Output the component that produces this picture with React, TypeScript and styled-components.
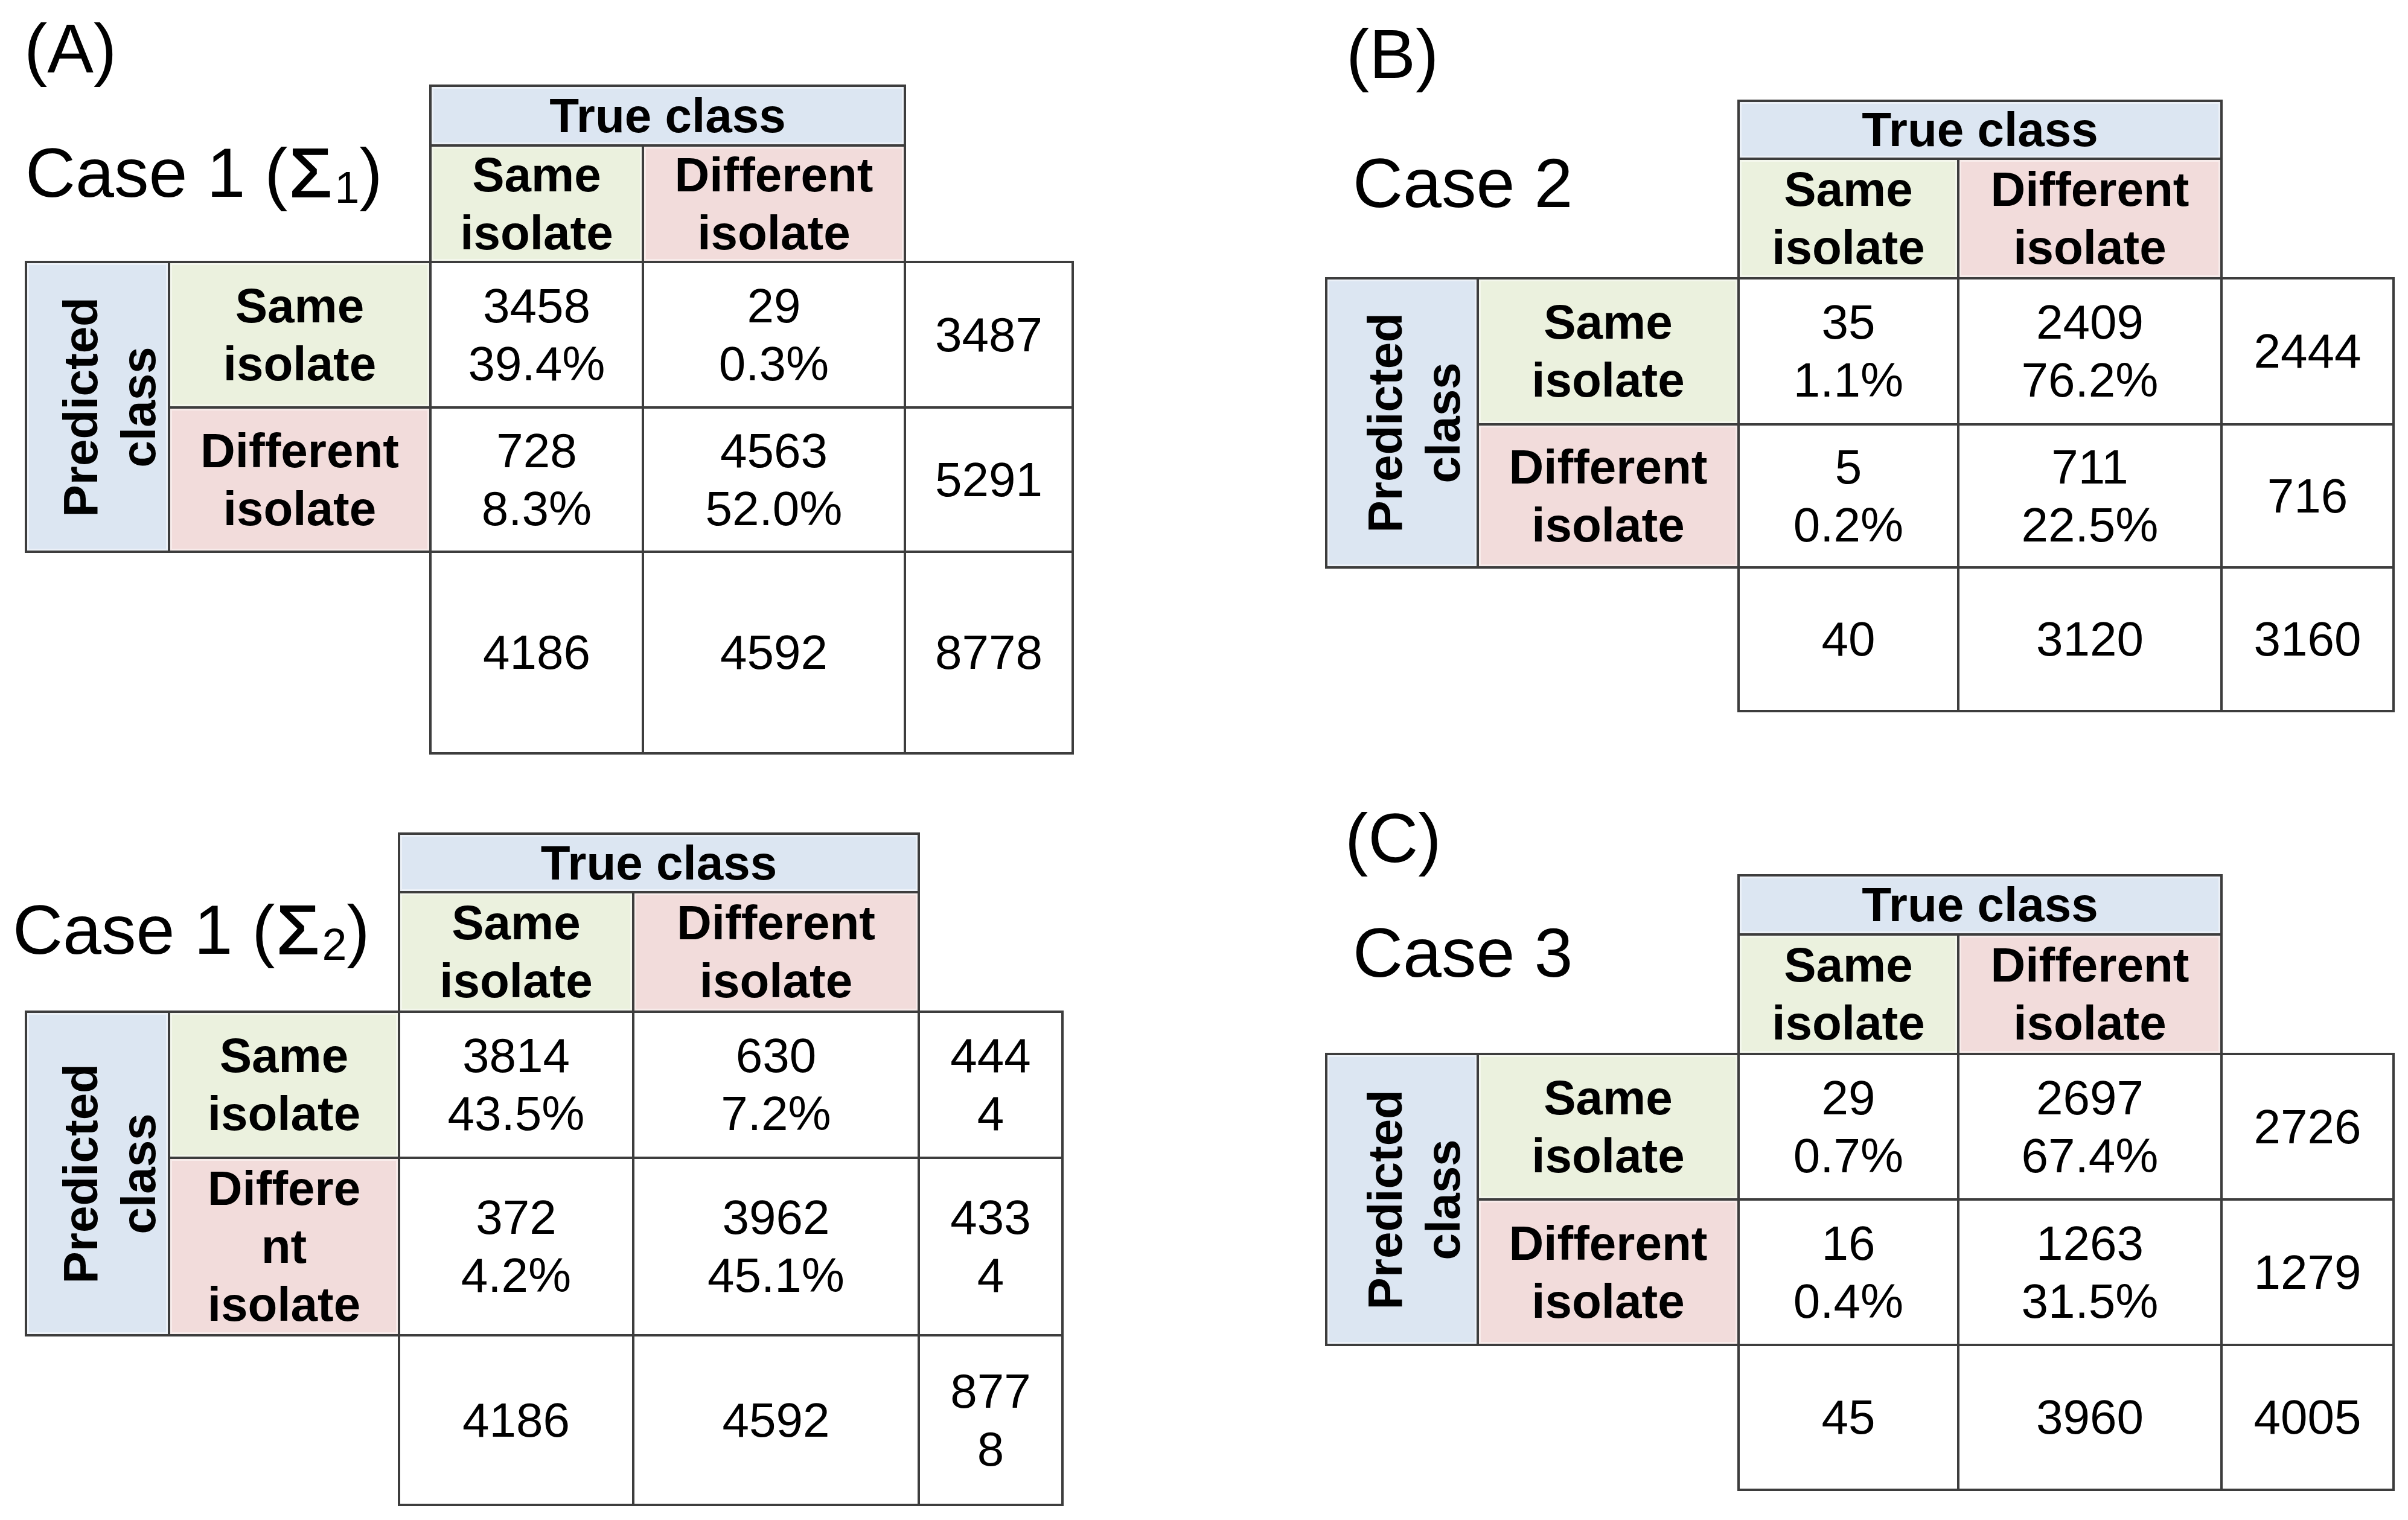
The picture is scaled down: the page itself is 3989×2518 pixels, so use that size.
import React from 'react';
import styled, { createGlobalStyle } from 'styled-components';

const GlobalStyle = createGlobalStyle`
  html, body { margin: 0; padding: 0; background: #ffffff; }
  body { font-family: "Liberation Sans", Arial, sans-serif; color: #000; }
`;

const Page = styled.div`
  display: flex;
  width: 3989px;
  height: 2518px;
  background: #ffffff;
  overflow: hidden;
`;

const Column = styled.div<{ $width?: number }>`
  display: flex;
  flex-direction: column;
  align-items: flex-start;
  ${(p) => (p.$width ? `width: ${p.$width}px; flex: none;` : 'flex: 1;')}
`;

const PanelLabel = styled.div<{ $ml: number; $mt: number }>`
  margin: ${(p) => p.$mt}px 0 0 ${(p) => p.$ml}px;
  font-size: 115px;
  line-height: 115px;
  height: 115px;
  white-space: nowrap;
`;

const Matrix = styled.div<{ $cols: number[]; $rows: number[]; $ml: number; $mt: number }>`
  display: grid;
  grid-template-columns: ${(p) => p.$cols.map((c) => `${c}px`).join(' ')};
  grid-template-rows: ${(p) => p.$rows.map((r) => `${r}px`).join(' ')};
  margin: ${(p) => p.$mt}px 0 0 ${(p) => p.$ml}px;
  font-size: 80px;
  line-height: 96px;
`;

const Title = styled.div<{ $pt: number; $ml: number }>`
  grid-column: 1 / 3;
  grid-row: 1 / 3;
  align-self: start;
  justify-self: start;
  margin-top: ${(p) => p.$pt}px;
  margin-left: ${(p) => p.$ml}px;
  font-size: 115px;
  line-height: 115px;
  white-space: nowrap;
`;

const Sigma = styled.span`
  -webkit-text-stroke: 2px #000;
  margin-left: 0.02em;
`;

const Sub = styled.sub`
  font-size: 0.64em;
  line-height: 0;
  vertical-align: -0.13em;
  margin-left: 0.06em;
`;

type Tone = 'blue' | 'green' | 'pink' | 'white';

const toneColor: Record<Tone, string> = {
  blue: '#dce6f2',
  green: '#ebf1de',
  pink: '#f2dcdb',
  white: '#ffffff',
};

const Cell = styled.div<{ $row: string; $col: string; $tone?: Tone; $bold?: boolean }>`
  grid-row: ${(p) => p.$row};
  grid-column: ${(p) => p.$col};
  display: flex;
  align-items: center;
  justify-content: center;
  text-align: center;
  background: ${(p) => toneColor[p.$tone || 'white']};
  box-shadow: ${(p) => (p.$tone && p.$tone !== 'white' ? 'inset 0 0 0 5px rgba(255,255,255,0.45)' : 'none')};
  outline: 4px solid #3d3d3d;
  outline-offset: -2px;
  font-weight: ${(p) => (p.$bold ? 700 : 400)};
  white-space: nowrap;
`;

const PredCell = styled(Cell)`
  padding-left: 40px;
`;

const Vertical = styled.span`
  writing-mode: vertical-rl;
  transform: rotate(180deg);
  text-align: center;
  font-weight: 700;
`;

const Lines: React.FC<{ lines: string[] }> = ({ lines }) => (
  <span>
    {lines.map((l, i) => (
      <React.Fragment key={i}>
        {i > 0 && <br />}
        {l}
      </React.Fragment>
    ))}
  </span>
);

type Fig = {
  title: React.ReactNode;
  titlePt: number;
  titleMl: number;
  cols: number[];
  rows: number[];
  ml: number;
  mt: number;
  rowLabels: [string[], string[]];
  cells: [[string[], string[]], [string[], string[]]];
  rowTotals: [string[], string[]];
  colTotals: [string[], string[], string[]];
};

const ConfusionMatrix: React.FC<{ fig: Fig }> = ({ fig }) => (
  <Matrix $cols={fig.cols} $rows={fig.rows} $ml={fig.ml} $mt={fig.mt}>
    <Title $pt={fig.titlePt} $ml={fig.titleMl}>
      {fig.title}
    </Title>
    <Cell $row="1" $col="3 / 5" $tone="blue" $bold>
      True class
    </Cell>
    <Cell $row="2" $col="3" $tone="green" $bold>
      <Lines lines={['Same', 'isolate']} />
    </Cell>
    <Cell $row="2" $col="4" $tone="pink" $bold>
      <Lines lines={['Different', 'isolate']} />
    </Cell>
    <PredCell $row="3 / 5" $col="1" $tone="blue" $bold>
      <Vertical>
        Predicted
        <br />
        class
      </Vertical>
    </PredCell>
    <Cell $row="3" $col="2" $tone="green" $bold>
      <Lines lines={fig.rowLabels[0]} />
    </Cell>
    <Cell $row="4" $col="2" $tone="pink" $bold>
      <Lines lines={fig.rowLabels[1]} />
    </Cell>
    {fig.cells.map((r, ri) =>
      r.map((c, ci) => (
        <Cell key={`${ri}-${ci}`} $row={`${ri + 3}`} $col={`${ci + 3}`}>
          <Lines lines={c} />
        </Cell>
      ))
    )}
    {fig.rowTotals.map((t, ri) => (
      <Cell key={`rt${ri}`} $row={`${ri + 3}`} $col="5">
        <Lines lines={t} />
      </Cell>
    ))}
    {fig.colTotals.map((t, ci) => (
      <Cell key={`ct${ci}`} $row="5" $col={`${ci + 3}`}>
        <Lines lines={t} />
      </Cell>
    ))}
  </Matrix>
);

const SAME = ['Same', 'isolate'];
const DIFF = ['Different', 'isolate'];

const figA1: Fig = {
  title: (
    <>
      Case 1 (<Sigma>Σ</Sigma>
      <Sub>1</Sub>)
    </>
  ),
  titlePt: 87,
  titleMl: -1,
  cols: [237, 433, 352, 434, 278],
  rows: [99, 193, 241, 239, 334],
  ml: 43,
  mt: 4,
  rowLabels: [SAME, DIFF],
  cells: [
    [
      ['3458', '39.4%'],
      ['29', '0.3%'],
    ],
    [
      ['728', '8.3%'],
      ['4563', '52.0%'],
    ],
  ],
  rowTotals: [['3487'], ['5291']],
  colTotals: [['4186'], ['4592'], ['8778']],
};

const figA2: Fig = {
  title: (
    <>
      Case 1 (<Sigma>Σ</Sigma>
      <Sub>2</Sub>)
    </>
  ),
  titlePt: 102,
  titleMl: -22,
  cols: [237, 381, 388, 473, 238],
  rows: [97, 198, 242, 294, 281],
  ml: 43,
  mt: 133,
  rowLabels: [SAME, ['Differe', 'nt', 'isolate']],
  cells: [
    [
      ['3814', '43.5%'],
      ['630', '7.2%'],
    ],
    [
      ['372', '4.2%'],
      ['3962', '45.1%'],
    ],
  ],
  rowTotals: [
    ['444', '4'],
    ['433', '4'],
  ],
  colTotals: [['4186'], ['4592'], ['877', '8']],
};

const figB: Fig = {
  title: 'Case 2',
  titlePt: 79,
  titleMl: 44,
  cols: [251, 432, 364, 436, 285],
  rows: [96, 198, 242, 237, 238],
  ml: 37,
  mt: 20,
  rowLabels: [SAME, DIFF],
  cells: [
    [
      ['35', '1.1%'],
      ['2409', '76.2%'],
    ],
    [
      ['5', '0.2%'],
      ['711', '22.5%'],
    ],
  ],
  rowTotals: [['2444'], ['716']],
  colTotals: [['40'], ['3120'], ['3160']],
};

const figC: Fig = {
  title: 'Case 3',
  titlePt: 71,
  titleMl: 44,
  cols: [251, 432, 364, 436, 285],
  rows: [98, 198, 241, 241, 240],
  ml: 37,
  mt: 4,
  rowLabels: [SAME, DIFF],
  cells: [
    [
      ['29', '0.7%'],
      ['2697', '67.4%'],
    ],
    [
      ['16', '0.4%'],
      ['1263', '31.5%'],
    ],
  ],
  rowTotals: [['2726'], ['1279']],
  colTotals: [['45'], ['3960'], ['4005']],
};

export default function App() {
  return (
    <>
      <GlobalStyle />
      <Page>
        <Column $width={2160}>
          <PanelLabel $ml={40} $mt={23}>
            (A)
          </PanelLabel>
          <ConfusionMatrix fig={figA1} />
          <ConfusionMatrix fig={figA2} />
        </Column>
        <Column>
          <PanelLabel $ml={70} $mt={32}>
            (B)
          </PanelLabel>
          <ConfusionMatrix fig={figB} />
          <PanelLabel $ml={68} $mt={153}>
            (C)
          </PanelLabel>
          <ConfusionMatrix fig={figC} />
        </Column>
      </Page>
    </>
  );
}
